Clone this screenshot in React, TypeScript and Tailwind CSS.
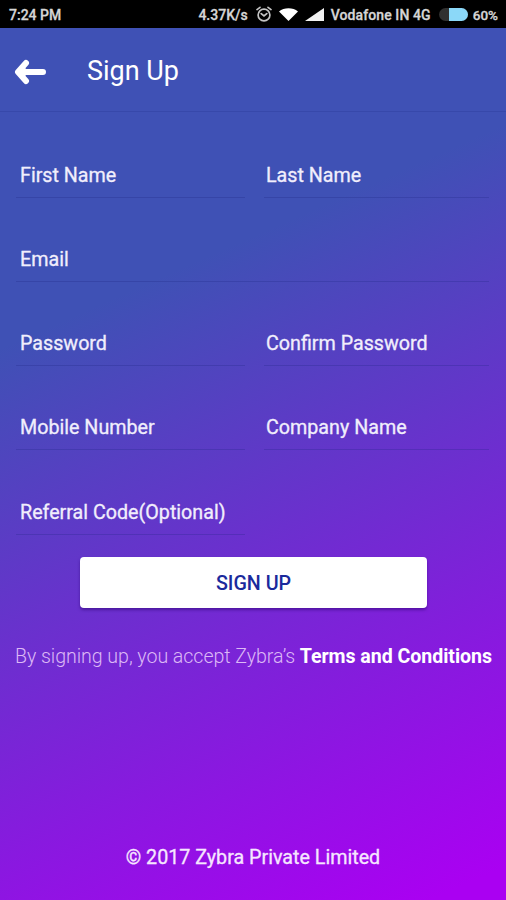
type FieldProps = {
  label: string;
  type?: string;
  className?: string;
};

function StatusBar() {
  return (
    <div className="flex h-7 items-center bg-black pl-[9px] pr-[8px] pt-[2px] text-[14px] font-medium text-[#d6d6d6] [-webkit-text-stroke:0.3px_#d6d6d6]">
      <span>7:24 PM</span>
      <div className="ml-auto flex items-center">
        <span>4.37K/s</span>
        <svg className="mb-[2px] ml-[8px]" width="16" height="16" viewBox="0 0 16 16" fill="none" stroke="#c4c4c4" strokeWidth="1.7" strokeLinecap="round">
          <circle cx="8" cy="9" r="5.9" />
          <path d="M1 3.6 4 1.3M15 3.6 12 1.3M5.2 7.6 8 10l2.8-2.4" />
        </svg>
        <svg className="mb-[2px] ml-[7px]" width="19" height="14" viewBox="0 0 19 14" fill="#fff">
          <path d="M0 4.500C5 .2 14 .2 19 4.500L9.500 14z" />
        </svg>
        <svg className="mb-[2px] ml-[7px]" width="19" height="14" viewBox="0 0 19 14" fill="#f2f2f2">
          <path d="M0 14 19 1v13z" />
        </svg>
        <span className="ml-[7px] tracking-[0.1px]">Vodafone IN 4G</span>
        <div className="mb-[2px] ml-[8px] flex h-[13px] w-[29px] overflow-hidden rounded-full bg-[#303030]">
          <div className="ml-auto h-full w-[19px] bg-[#8bd8f8]" />
        </div>
        <span className="ml-[5px] text-[13.5px]">60%</span>
      </div>
    </div>
  );
}

function Field({ label, type = "text", className = "" }: FieldProps) {
  return (
    <div className={`h-[84.3px] pt-[38px] ${className}`}>
      <input
        type={type}
        placeholder={label}
        className="block h-[47px] w-full border-b border-[#1a237e]/25 bg-transparent pl-[4px] pt-[3px] text-[19.7px] text-white outline-none [-webkit-text-stroke:0.3px_#f1eefc] placeholder:text-[#f1eefc] placeholder:opacity-100"
      />
    </div>
  );
}

export default function App() {
  return (
    <div className="flex h-[900px] w-[506px] flex-col overflow-hidden bg-[linear-gradient(156deg,#3f51b5_31%,#aa00f2_97%)] font-['Roboto',sans-serif] text-white">
      <StatusBar />

      <header className="flex h-[84px] items-center border-b border-[#303f9f]/50 pl-[14px]">
        <svg className="mt-[4px]" width="33" height="26" viewBox="0 0 33 26" fill="none" stroke="#fff" strokeWidth="6" strokeLinecap="round" strokeLinejoin="round">
          <path d="M12 4 4 13l8 9M5 13h24M9 11v4" />
        </svg>
        <h1 className="ml-[40px] pt-[4px] text-[27px]">Sign Up</h1>
      </header>

      <form className="flex flex-col pt-[0.6px]">
        <div className="grid grid-cols-[229px_225px] gap-x-[19px] pl-[16px]">
          <Field label="First Name" />
          <Field label="Last Name" className="[&>input]:pl-[2px]" />
          <Field label="Email" className="col-span-2" />
          <Field label="Password" type="password" />
          <Field label="Confirm Password" type="password" className="[&>input]:pl-[2px]" />
          <Field label="Mobile Number" />
          <Field label="Company Name" className="[&>input]:pl-[2px]" />
          <Field label="Referral Code(Optional)" />
        </div>

        <button
          type="button"
          className="ml-[80px] mt-[23.4px] h-[51px] w-[347px] rounded-[4px] bg-white pt-[2px] text-[19.7px] font-medium text-[#1a2a9c] shadow-[0_2px_3px_rgba(40,0,110,0.5)]"
        >
          SIGN UP
        </button>
      </form>

      <p className="ml-[15px] mt-[34px] whitespace-nowrap text-[19.6px] font-light leading-[30px] tracking-[-0.05px] text-[#dcb8f6]">
        By signing up, you accept Zybra’s <a className="font-bold text-white">Terms and Conditions</a>
      </p>

      <footer className="mb-[27px] mt-auto text-center text-[19.7px] text-[#f6e6ff] [-webkit-text-stroke:0.3px_#f6e6ff]">© 2017 Zybra Private Limited</footer>
    </div>
  );
}
